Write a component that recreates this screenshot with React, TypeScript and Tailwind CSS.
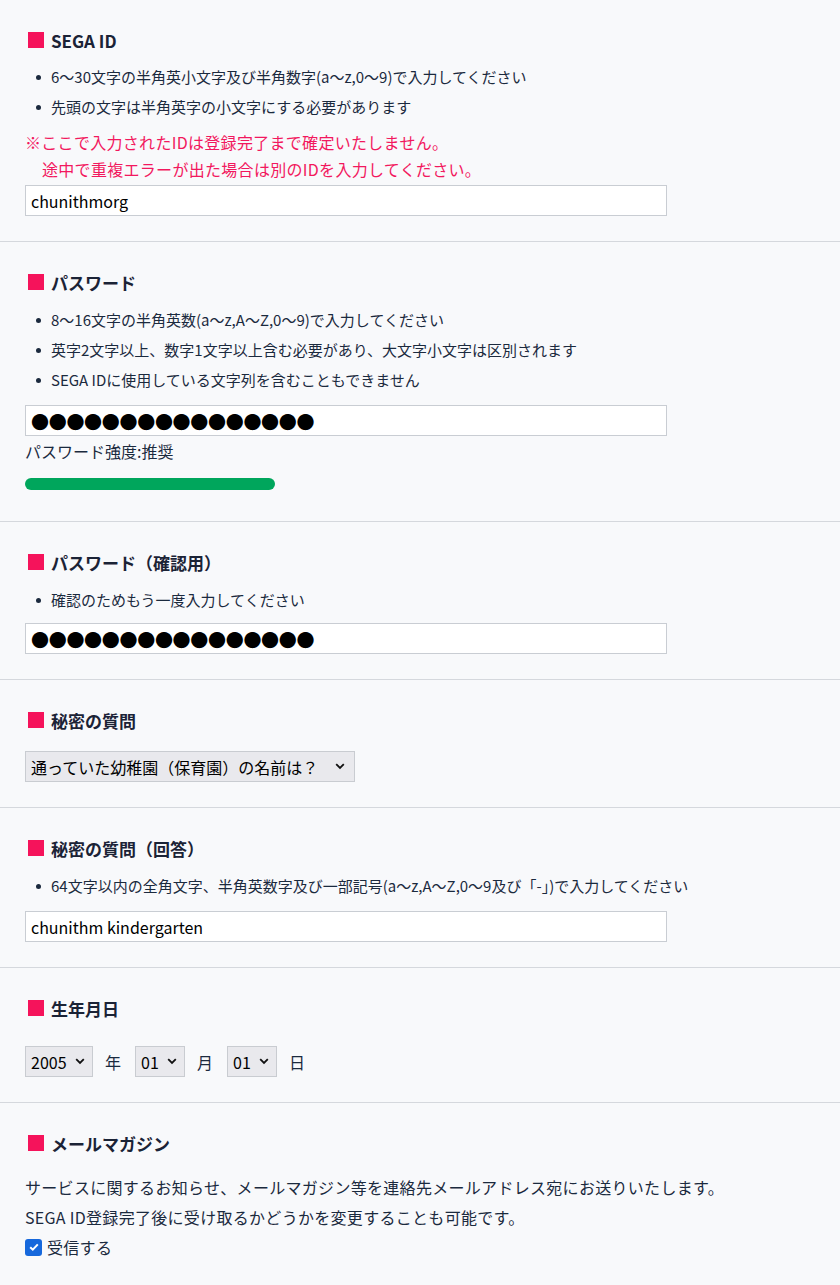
import React from "react";

const FONT = { fontFamily: '"Noto Sans CJK JP", "Noto Sans", sans-serif' };

function Title({ children }: { children: React.ReactNode }) {
  return (
    <div className="flex items-center h-4">
      <span className="ml-[3px] w-4 h-4 bg-[#f5135b] shrink-0" />
      <span className="ml-[7px] text-[17px] font-bold leading-none text-[#1b2336]">{children}</span>
    </div>
  );
}

function Bullets({ items, className = "" }: { items: string[]; className?: string }) {
  return (
    <ul className={className}>
      {items.map((t) => (
        <li key={t} className="flex items-center h-[30px] text-[15px] text-[#1b2a3e]">
          <span className="ml-[11px] mr-[10px] w-[5px] h-[5px] rounded-full bg-[#1b2a3e] shrink-0" />
          <span>{t}</span>
        </li>
      ))}
    </ul>
  );
}

function TextBox({ value, className = "", big = false }: { value: string; className?: string; big?: boolean }) {
  return (
    <input
      readOnly
      value={value}
      className={
        "block w-[642px] h-[31px] border border-[#c9cdd3] bg-white px-[5px] text-black outline-none " +
        (big ? "text-[18px] tracking-[-0.3px]" : "text-[16px]") +
        " " +
        className
      }
      style={FONT}
    />
  );
}

function Chevron() {
  return (
    <svg width="10" height="7" viewBox="0 0 10 7" className="block shrink-0">
      <path d="M1.2 1.2 L5 5 L8.8 1.2" fill="none" stroke="#111" strokeWidth="1.8" />
    </svg>
  );
}

function SelectBox({ value, width, chevronRight = 13 }: { value: string; width: number; chevronRight?: number }) {
  return (
    <div
      className="flex items-center h-[31px] border border-[#c9ccd1] bg-[#e9e9ed] pl-[5px] text-[16px] text-black shrink-0"
      style={{ width }}
    >
      <span className="flex-1 whitespace-nowrap">{value}</span>
      <span style={{ marginRight: chevronRight }}>
        <Chevron />
      </span>
    </div>
  );
}

function Section({ children, className = "" }: { children: React.ReactNode; className?: string }) {
  return <section className={"border-b border-[#d5d8dd] pt-8 pb-[25px] pl-[25px] " + className}>{children}</section>;
}

export default function App() {
  const dots = "●".repeat(16);
  return (
    <div className="min-h-[1285px] w-[840px] bg-[#f8f9fb] text-[#1b2a3e]" style={FONT}>
      <Section>
        <Title>SEGA ID</Title>
        <Bullets
          className="mt-[14px]"
          items={[
            "6〜30文字の半角英小文字及び半角数字(a〜z,0〜9)で入力してください",
            "先頭の文字は半角英字の小文字にする必要があります",
          ]}
        />
        <div className="mt-[7px] text-[16px] leading-[27px] text-[#f2185e] tracking-[0.3px]">
          <div>※ここで入力されたIDは登録完了まで確定いたしません。</div>
          <div className="pl-[17px]">途中で重複エラーが出た場合は別のIDを入力してください。</div>
        </div>
        <TextBox value="chunithmorg" className="mt-[2px]" />
      </Section>

      <Section>
        <Title>パスワード</Title>
        <Bullets
          className="mt-[15px]"
          items={[
            "8〜16文字の半角英数(a〜z,A〜Z,0〜9)で入力してください",
            "英字2文字以上、数字1文字以上含む必要があり、大文字小文字は区別されます",
            "SEGA IDに使用している文字列を含むこともできません",
          ]}
        />
        <TextBox value={dots} big className="mt-[10px]" />
        <div className="mt-[3px] text-[16px] leading-[24px] text-[#1b2a3e]">パスワード強度:推奨</div>
        <div className="mt-[15px] mb-[6px] w-[250px] h-3 rounded-full bg-[#00a65c]" />
      </Section>

      <Section>
        <Title>パスワード（確認用）</Title>
        <Bullets className="mt-[15px]" items={["確認のためもう一度入力してください"]} />
        <TextBox value={dots} big className="mt-[8px]" />
      </Section>

      <Section>
        <Title>秘密の質問</Title>
        <div className="mt-[23px]">
          <SelectBox value="通っていた幼稚園（保育園）の名前は？" width={330} chevronRight={9} />
        </div>
      </Section>

      <Section>
        <Title>秘密の質問（回答）</Title>
        <Bullets
          className="mt-[15px]"
          items={["64文字以内の全角文字、半角英数字及び一部記号(a〜z,A〜Z,0〜9及び「-」)で入力してください"]}
        />
        <TextBox value="chunithm kindergarten" className="mt-[10px]" />
      </Section>

      <Section>
        <Title>生年月日</Title>
        <div className="mt-[30px] flex items-center text-[16px] text-[#1b2a3e]">
          <SelectBox value="2005" width={68} chevronRight={7} />
          <span className="ml-[12px] mr-[14px]">年</span>
          <SelectBox value="01" width={50} chevronRight={7} />
          <span className="ml-[12px] mr-[14px]">月</span>
          <SelectBox value="01" width={50} chevronRight={7} />
          <span className="ml-[12px]">日</span>
        </div>
      </Section>

      <section className="pt-8 pl-[25px] pb-6">
        <Title>メールマガジン</Title>
        <div className="mt-[21px] text-[16px] leading-[30px] text-[#1b2a3e] tracking-[0.3px]">
          <div>サービスに関するお知らせ、メールマガジン等を連絡先メールアドレス宛にお送りいたします。</div>
          <div>SEGA ID登録完了後に受け取るかどうかを変更することも可能です。</div>
          <label className="flex items-center h-[30px]">
            <span className="w-[17px] h-[17px] rounded-[3px] bg-[#1668dc] flex items-center justify-center shrink-0">
              <svg width="12" height="12" viewBox="0 0 12 12">
                <path d="M2.2 6.2 L4.8 8.7 L9.8 3.4" fill="none" stroke="white" strokeWidth="2" />
              </svg>
            </span>
            <span className="ml-[5px]">受信する</span>
          </label>
        </div>
      </section>
    </div>
  );
}
